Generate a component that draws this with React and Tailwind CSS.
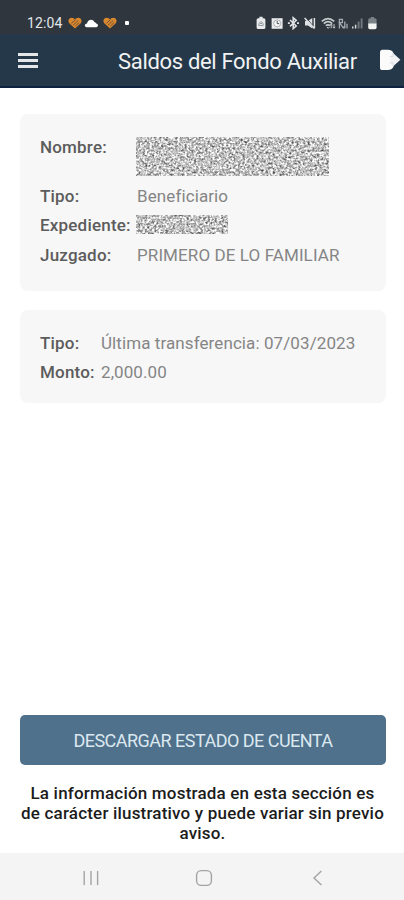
import React from 'react'

const ACCOUNT = [
  { label: 'Nombre:', noise: { id: 'noise-name', width: 193, height: 39, seed: 4 }, row: 'h-[49px]' },
  { label: 'Tipo:', value: 'Beneficiario', row: 'h-[29px]' },
  { label: 'Expediente:', noise: { id: 'noise-file', width: 92, height: 19, seed: 9 }, row: 'h-[30px]' },
  { label: 'Juzgado:', value: 'PRIMERO DE LO FAMILIAR', row: 'h-[29px]' },
]

const TRANSFER = [
  { label: 'Tipo:', value: 'Última transferencia: 07/03/2023' },
  { label: 'Monto:', value: '2,000.00' },
]

// grey grain that covers private data
function Noise({ id, width, height, seed }) {
  return (
    <svg width={width} height={height} className="ml-[-1px] block shrink-0">
      <filter id={id} x="0" y="0" width="100%" height="100%" colorInterpolationFilters="sRGB">
        <feTurbulence type="fractalNoise" baseFrequency="0.43 0.46" numOctaves="2" seed={seed} />
        <feColorMatrix
          values="0.9 0.9 0 0 -0.14
                  0.9 0.9 0 0 -0.14
                  0.9 0.9 0 0 -0.14
                  0 0 0 0 1"
        />
      </filter>
      <rect width={width} height={height} filter={`url(#${id})`} />
    </svg>
  )
}

function Heart() {
  return (
    <svg width="14" height="12" viewBox="0 0 14 12" className="block">
      <path d="M7 11.5 1.2 6.2C-.6 3.6 1 .8 3.6.8 5.2.8 6.3 1.6 7 2.6 7.7 1.6 8.8.8 10.4.8c2.6 0 4.2 2.8 2.4 5.4z" fill="#d9882f" />
      <path d="M3.4 6.3 7.6 2.7M5 8.2l5.2-4.6M7.2 9.2l4-3.6" stroke="#5a4230" strokeWidth="0.8" fill="none" />
    </svg>
  )
}

function StatusBar() {
  return (
    <div className="flex h-[34px] items-start bg-[#2f363d] pl-[27px] pt-[13px]">
      <span className="w-[41px] whitespace-nowrap text-[14px] leading-[21px] tracking-[0.1px] text-[#e3e6e8]">12:04</span>
      <div className="mt-[4px] flex items-center">
        <Heart />
        <svg width="15" height="12" viewBox="0 0 15 12" className="ml-[2px] block">
          <path d="M2.8 10.2C.2 10.2.2 6.8 3 6.6 3.6 2.4 8.8 1.2 10.4 5.2c1 0 1.6.6 1.8 1.4 2.4.2 2.4 3.6 0 3.6z" fill="#fff" />
        </svg>
        <span className="ml-[4px]"><Heart /></span>
        <span className="ml-[8px] h-[4px] w-[4px] rounded-[1px] bg-white" />
      </div>
      <svg width="124" height="14" viewBox="254 16 124 14" className="ml-auto mr-[26px] mt-[3px] block">
        {/* battery saver */}
        <path d="M259.4 16.8h3.2v1.4h1.2q1.6 0 1.6 1.6v7.6q0 1.6-1.6 1.6h-5.6q-1.6 0-1.6-1.6v-7.6q0-1.6 1.6-1.6h1.2z" fill="#e8eaeb" />
        <path d="M258.8 25.5v-2l2.2-2 2.2 2v2zM260 23.5h2" stroke="#8b9195" fill="none" strokeWidth="0.9" />
        {/* alarm */}
        <path d="M271.6 18.2h11v10.6h-11z" fill="#e8eaeb" />
        <circle cx="277.2" cy="23.4" r="3.5" fill="#f6f6f6" stroke="#8b9195" strokeWidth="0.7" />
        <path d="M277.2 21v2.6h2" stroke="#4d555b" fill="none" />
        {/* bluetooth */}
        <path d="m290 20 6.2 6-3 2.6V17.8l3 2.6-6.2 6" stroke="#dfe2e4" fill="none" strokeWidth="1.6" />
        <path d="M287.9 23.2h2M297 23.2h2" stroke="#dfe2e4" strokeWidth="1.8" />
        {/* muted */}
        <path d="M305 21h3l4.3-3v10.6l-4.3-3h-3z" fill="#dfe2e4" />
        <path d="m306 17.6 8 9.6" stroke="#2f363d" strokeWidth="1" />
        <path d="m304.6 18 9.8 10.6M314.4 18v10.6" stroke="#dfe2e4" strokeWidth="1.5" />
        {/* wifi */}
        <path d="M321.8 21.4q6.2-5.6 12.4 0M323.8 23.6q4.2-3.8 8.4 0M325.8 25.7q2.2-1.8 4.4 0" stroke="#c5c9cc" fill="none" strokeWidth="1.7" />
        <path d="m327 27 1.2 1.4 1.2-1.4M331.2 28.2v-4m-1.2 1.2 1.2-1.4 1.2 1.4M334 24v4m-1.2-1.2 1.2 1.4 1.2-1.4" stroke="#c5c9cc" fill="none" strokeWidth="1" />
        {/* no data */}
        <path d="M339.4 28.4v-9h3v3.2h-3l4.2 5.8M344.8 21.5v6.6m-1.5-1.4 1.5 1.6M347 28.4v-4.6" stroke="#a5abaf" fill="none" strokeWidth="1.3" />
        {/* signal */}
        <path d="M352.8 28.6v-2M355.6 28.6v-3.8" stroke="#d5d8da" strokeWidth="1.5" />
        <path d="M358.6 28.6v-7M361.6 28.6v-10" stroke="#71797f" strokeWidth="1.9" />
        {/* battery */}
        <path d="M370.8 17h3.2v1.2h1q1.6 0 1.6 1.6v4.2h-8.4v-4.2q0-1.6 1.6-1.6h1z" fill="#7c8388" />
        <path d="M368.2 23.6h8.4v4q0 1.6-1.6 1.6h-5.2q-1.6 0-1.6-1.6z" fill="#f2f3f3" />
      </svg>
    </div>
  )
}

function Header() {
  return (
    <div className="flex h-[54px] items-center border-b-2 border-[#0d2140] bg-[#243849] pl-[18px]">
      <button className="flex w-[20px] flex-col gap-[3px]">
        <span className="h-[3px] bg-[#e4e6e7]" />
        <span className="h-[3px] bg-[#e4e6e7]" />
        <span className="h-[3px] bg-[#e4e6e7]" />
      </button>
      <h1 className="ml-[80px] mt-[3px] w-[262px] whitespace-nowrap text-[22px] leading-[28px] tracking-[-0.32px] text-[#f1f2f3]">
        Saldos del Fondo Auxiliar
      </h1>
      <svg width="22" height="22" viewBox="0 0 22 22" className="block">
        <path d="M2.4.8h5.4q4 0 5.6 3.2V18q-1.6 3-5.6 3H2.4Q0 21 0 18.4V3.4Q0 .8 2.4.8z" fill="#fbfbfb" />
        <path d="m13 4 7.4 6.8-7.4 6.6-2.8-3V6.8z" fill="#f1f2f3" />
        <path d="M9.6 7.6h3.4V4.4M9.6 13.8h3.4v3" stroke="#d3d7da" fill="none" strokeWidth="0.8" />
      </svg>
    </div>
  )
}

export default function App() {
  return (
    <div className="flex h-[900px] w-[404px] flex-col overflow-hidden bg-white font-[Roboto,sans-serif]">
      <StatusBar />
      <Header />

      <main className="flex flex-1 flex-col px-[20px] pt-[26px]">
        <section className="mr-[-2px] h-[177px] rounded-[8px] bg-[#f7f7f7] pl-[20px] pt-[23px]">
          {ACCOUNT.map(({ label, value, noise, row }) => (
            <div key={label} className={`flex items-start text-[17px] leading-[20px] tracking-[0.1px] ${row}`}>
              <span className="w-[97px] shrink-0 whitespace-nowrap font-medium tracking-[0.2px] text-[#5c5c5c]">{label}</span>
              {value && <span className="whitespace-nowrap text-[#858585]">{value}</span>}
              {noise && <Noise {...noise} />}
            </div>
          ))}
        </section>

        <section className="mr-[-2px] mt-[19px] h-[93px] rounded-[8px] bg-[#f7f7f7] pl-[20px] pt-[23px]">
          {TRANSFER.map(({ label, value }) => (
            <div key={label} className="flex h-[29px] items-start whitespace-nowrap text-[17px] leading-[20px] tracking-[0.09px]">
              <span className="w-[61px] shrink-0 font-medium tracking-[0.2px] text-[#5c5c5c]">{label}</span>
              <span className="text-[#858585]">{value}</span>
            </div>
          ))}
        </section>

        <button className="mr-[-2px] mt-auto h-[50px] rounded-[5px] bg-[#4f718b] text-[18px] tracking-[-0.52px] text-[#dce8f0]">
          DESCARGAR ESTADO DE CUENTA
        </button>
        <p className="mb-[10px] ml-[-10px] mr-[-11px] mt-[18px] whitespace-nowrap text-center text-[17px] font-medium leading-[20px] tracking-[0.19px] text-[#1c1c1c]">
          La información mostrada en esta sección es
          <br />
          de carácter ilustrativo y puede variar sin previo
          <br />
          aviso.
        </p>
      </main>

      <nav className="flex h-[47px] items-center bg-[#f4f4f4] pl-[83px] pt-[2px]">
        <svg width="16" height="16" viewBox="0 0 16 16" className="block">
          <path d="M1.2 1v14M8 1v14M14.6 1v14" stroke="#a3a3a3" strokeWidth="1.4" />
        </svg>
        <svg width="18" height="18" viewBox="0 0 18 18" className="ml-[96px] block">
          <rect x="1.6" y="1.6" width="14.8" height="14.8" rx="4.6" fill="none" stroke="#a3a3a3" strokeWidth="1.4" />
        </svg>
        <svg width="12" height="18" viewBox="0 0 12 18" className="ml-[99px] block">
          <path d="M9.4 2 2 9l7.4 7" fill="none" stroke="#a3a3a3" strokeWidth="1.4" />
        </svg>
      </nav>
    </div>
  )
}
